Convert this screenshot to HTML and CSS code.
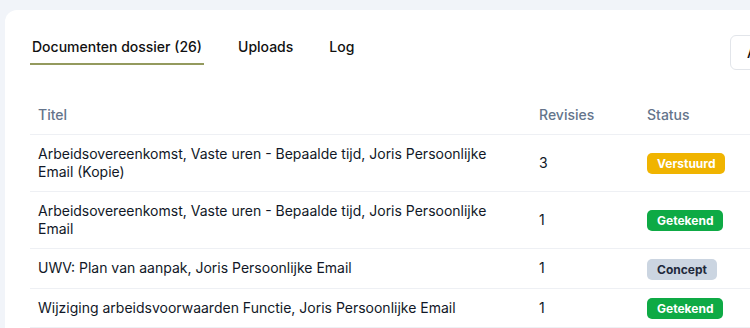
FILE: index.html
```html
<!DOCTYPE html>
<html lang="nl">
<head>
    <meta charset="UTF-8">
    <meta name="viewport" content="width=device-width, initial-scale=1.0">
    <title>Documenten dossier</title>
    <link rel="stylesheet" href="styles.css">
</head>
<body>
    <div class="card">
        <div class="toolbar">
            <div class="tabs">
                <a class="tab active" href="#">Documenten dossier (26)</a>
                <a class="tab" href="#">Uploads</a>
                <a class="tab" href="#">Log</a>
            </div>
            <button class="btn">Acties</button>
        </div>
        <table class="docs">
            <thead>
                <tr>
                    <th class="col-title">Titel</th>
                    <th class="col-rev">Revisies</th>
                    <th>Status</th>
                </tr>
            </thead>
            <tbody>
                <tr>
                    <td>Arbeidsovereenkomst, Vaste uren - Bepaalde tijd, Joris Persoonlijke Email (Kopie)</td>
                    <td>3</td>
                    <td><span class="badge badge-sent">Verstuurd</span></td>
                </tr>
                <tr>
                    <td>Arbeidsovereenkomst, Vaste uren - Bepaalde tijd, Joris Persoonlijke Email</td>
                    <td>1</td>
                    <td><span class="badge badge-signed">Getekend</span></td>
                </tr>
                <tr>
                    <td>UWV: Plan van aanpak, Joris Persoonlijke Email</td>
                    <td>1</td>
                    <td><span class="badge badge-draft">Concept</span></td>
                </tr>
                <tr>
                    <td>Wijziging arbeidsvoorwaarden Functie, Joris Persoonlijke Email</td>
                    <td>1</td>
                    <td><span class="badge badge-signed">Getekend</span></td>
                </tr>
            </tbody>
        </table>
    </div>
</body>
</html>
```

FILE: styles.css
```css
* {
    margin: 0;
    padding: 0;
    box-sizing: border-box;
    font-family: Inter, "Noto Sans", sans-serif;
}
body {
    background: #f1f4f9;
    color: #111827;
    overflow: hidden;
    padding: 10px 0 0 5px;
}
.card {
    background: #fff;
    width: 826px;
    border-radius: 12px;
    padding: 25px;
    min-height: 400px;
}
.toolbar {
    display: flex;
    align-items: flex-start;
    justify-content: space-between;
    height: 35px;
}
.tabs {
    display: flex;
    gap: 32px;
}
.tab {
    font-size: 14px;
    font-weight: 500;
    line-height: 20px;
    color: #111;
    text-decoration: none;
    padding: 2px 2px 6px;
    border-bottom: 2px solid transparent;
}
.tab.active {
    border-bottom-color: #949a5e;
}
.btn {
    height: 35px;
    padding: 0 16px;
    background: #fff;
    border: 1px solid #e2e5ea;
    border-radius: 6px;
    font-size: 14px;
    font-weight: 500;
    color: #111;
}
.docs {
    width: 100%;
    margin-top: 26px;
    border-collapse: collapse;
    font-size: 14px;
    line-height: 18px;
}
.docs th, .docs td {
    text-align: left;
    padding: 10px 8px;
    border-bottom: 1px solid #eef0f4;
    vertical-align: middle;
}
.docs th {
    font-weight: 500;
    color: #64748b;
}
.col-title {
    width: 501px;
}
.col-rev {
    width: 108px;
}
.badge {
    display: inline-block;
    vertical-align: middle;
    margin: -2px 0;
    font-size: 12px;
    font-weight: 700;
    line-height: 21px;
    padding: 0 10px;
    border-radius: 5px;
    color: #fff;
}
.badge-sent { background: #f0b400; }
.badge-signed { background: #0eaa45; }
.badge-draft { background: #cbd5e1; color: #1e293b; }
```
